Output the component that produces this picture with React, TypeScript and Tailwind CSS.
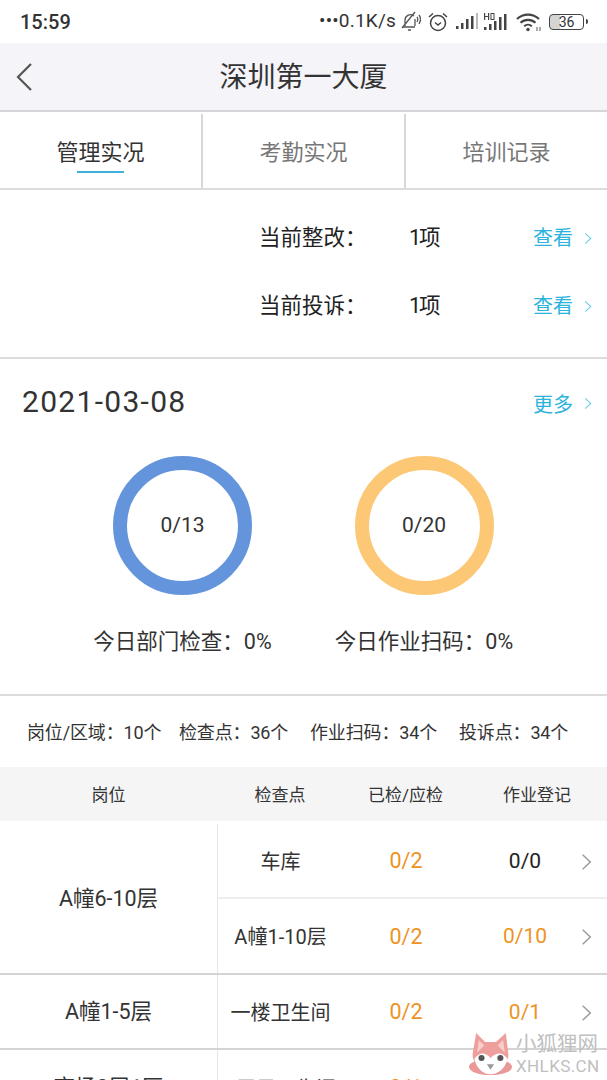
import React from "react";

const F = "font-['Roboto','Noto_Sans_CJK_SC',sans-serif]";

function Chevron({ className }: { className: string }) {
  return (
    <svg viewBox="0 0 10 16" fill="none" stroke="currentColor" className={className}>
      <path d="M1.5 1.5 8.5 8l-7 6.5" strokeWidth="1.3" />
    </svg>
  );
}

function Status() {
  return (
    <div className="h-[43px] bg-white flex items-center pl-5 pr-[19px] text-[#333] shrink-0">
      <span className="text-[20px] font-medium leading-none">15:59</span>
      <div className="ml-auto flex items-center">
        <span className="text-[19px] tracking-[0.2px] whitespace-nowrap mr-[4px]">•••0.1K/s</span>
        <svg width="21" height="21" viewBox="0 0 21 21" fill="none" stroke="#555" strokeWidth="1.3">
          <path d="M3 16h12M5 15V9a5.5 5.5 0 0 1 9-4M15 8v7M8 19h3M2 17 15 1M17 6q1.5 2 0 5M19 4q3 4 0 9" />
        </svg>
        <svg width="22" height="22" viewBox="0 0 22 22" fill="none" stroke="#444" strokeWidth="1.5" className="ml-[6px]">
          <circle cx="11" cy="12" r="7.5" />
          <path d="M8 11.5l3 2.5 3-2.5M2 6l4-3.5M20 6l-4-3.5" />
        </svg>
        <svg width="22" height="17" viewBox="0 0 22 17" fill="#444" className="ml-[7px]">
          <rect x="0" y="13" width="2.5" height="3" />
          <rect x="5" y="10" width="2.5" height="6" />
          <rect x="10" y="6" width="2.5" height="10" />
          <rect x="15" y="3" width="2.5" height="13" />
          <rect x="20" y="0" width="2" height="16" fill="#bbb" />
        </svg>
        <svg width="24" height="20" viewBox="0 0 24 20" fill="#444" className="ml-[6px]">
          <rect x="0" y="15" width="2.5" height="3" />
          <rect x="5" y="12" width="2.5" height="6" />
          <rect x="10" y="9" width="2.5" height="9" />
          <rect x="15" y="5" width="2.5" height="13" />
          <rect x="20" y="2" width="2.5" height="16" />
          <rect x="0" y="1" width="1.2" height="7" />
          <rect x="4" y="1" width="1.2" height="7" />
          <rect x="0" y="4" width="5" height="1" />
          <rect x="7" y="1.5" width="3" height="6" fill="none" stroke="#444" strokeWidth="1" />
        </svg>
        <svg width="26" height="20" viewBox="0 0 26 20" fill="none" stroke="#444" strokeWidth="2.1" className="ml-[8px]">
          <path d="M1 7a16 16 0 0 1 22 0M4.5 10.8a11 11 0 0 1 15 0M8.2 14.2a5.5 5.5 0 0 1 7.6 0" />
          <circle cx="12" cy="17.5" r="1.7" fill="#444" stroke="none" />
          <path d="M21 15v4M24 15v4" strokeWidth="0.9" />
        </svg>
        <div className="ml-[7px] flex items-center">
          <div className="w-[35px] h-[16px] rounded-[4px] border border-[#444] bg-[linear-gradient(90deg,#d5d5d5_30%,transparent_30%)] flex items-center justify-center text-[14px] leading-none text-[#333]">
            36
          </div>
          <div className="w-[2px] h-[5px] bg-[#444] ml-[2px] rounded-r-sm" />
        </div>
      </div>
    </div>
  );
}

function Tab({ label, active, border }: { label: string; active?: boolean; border?: boolean }) {
  return (
    <div className={`relative flex-1 flex items-center justify-center text-[22px] ${active ? "text-[#333]" : "text-[#777]"} ${border ? "border-r-2 border-[#d8d8d8]" : ""}`}>
      <span className="pt-[3px]">{label}</span>
      {active && <div className="absolute left-[77px] top-[57px] w-[47px] h-[2px] bg-[#3eb3d9]" />}
    </div>
  );
}

function InfoRow({ label }: { label: string }) {
  return (
    <div className="h-[68px] flex items-center text-[21.5px] text-[#222] pt-[2px]">
      <span className="ml-[259px] w-[150px]">{label}</span>
      <span className="w-[124px] tracking-[-2px]">1项</span>
      <span className="text-[20px] text-[#2bb3de]">查看</span>
      <Chevron className="ml-[11px] w-[8px] h-[13px] text-[#6fcbe8]" />
    </div>
  );
}

function Ring({ value, label, color }: { value: string; label: string; color: string }) {
  return (
    <div className="w-[242px] flex flex-col items-center -ml-[0.5px]">
      <div className={`w-[139px] h-[139px] rounded-full border-[14px] ${color} flex items-center justify-center text-[21px] text-[#333]`}>
        {value}
      </div>
      <div className="mt-[31px] text-[21.5px] leading-[32px] text-[#333] whitespace-nowrap">{label}</div>
    </div>
  );
}

function Cell({ name, a, b, bOrange, h }: { name: string; a: string; b: string; bOrange?: boolean; h: string }) {
  return (
    <div className={`${h} flex items-center text-[20px] pt-[2px]`}>
      <span className="w-[125px] text-center text-[#333] whitespace-nowrap">{name}</span>
      <span className="w-[126px] text-center text-[#ec941f] text-[21.5px]">{a}</span>
      <span className={`w-[112px] text-center text-[21px] ${bOrange ? "text-[#ec941f]" : "text-[#222]"}`}>{b}</span>
      <Chevron className="w-[11px] h-[18px] text-[#999]" />
    </div>
  );
}

function Fox() {
  return (
    <svg width="45" height="44" viewBox="0 0 50 49">
      <ellipse cx="25" cy="39" rx="24" ry="9" fill="#e99a98" />
      <path d="M9 1 19 11h12L42 1l3 24a20 18 0 0 1-40 0z" fill="#ef9f9b" />
      <path d="M12 9l6 6-8 8zM39 9l-6 6 8 8z" fill="#f7cfcb" />
      <path d="M7 30c6-8 12-8 18-1 7-7 13-7 19 1-3 12-12 17-19 17S10 42 7 30z" fill="#fff" />
      <circle cx="15" cy="29" r="3.4" fill="#555" />
      <circle cx="36" cy="29" r="3.4" fill="#555" />
      <path d="M21 36h8l-4 6z" fill="#999" />
    </svg>
  );
}

export default function App() {
  return (
    <div className={`relative w-[607px] h-[1080px] overflow-hidden bg-white flex flex-col ${F}`}>
      <Status />
      <header className="h-[69px] shrink-0 bg-[#f4f4f9] border-b-2 border-[#d6d6d8] flex items-center relative">
        <svg width="18" height="28" viewBox="0 0 18 28" fill="none" stroke="#555" strokeWidth="2.2" className="ml-[15px]">
          <path d="M16 1 3 14l13 13" />
        </svg>
        <div className="absolute inset-x-0 text-center text-[28px] text-[#333] pt-[3px]">深圳第一大厦</div>
      </header>

      <div className="h-[78px] shrink-0 flex border-b-2 border-[#dcdcdc] pt-[2px]">
        <Tab label="管理实况" active border />
        <Tab label="考勤实况" border />
        <Tab label="培训记录" />
      </div>

      <section className="h-[169px] shrink-0 py-[13px] border-b-2 border-[#dcdcdc]">
        <InfoRow label="当前整改：" />
        <InfoRow label="当前投诉：" />
      </section>

      <section className="h-[337px] shrink-0 border-b-2 border-[#dcdcdc] relative">
        <div className="flex items-center h-[88px] pl-[22px] pr-[15px]">
          <span className="text-[30px] text-[#333] tracking-[1.3px] pb-[4px]">2021-03-08</span>
          <span className="ml-auto text-[20px] text-[#2bb3de] pt-[3px]">更多</span>
          <Chevron className="ml-[11px] w-[8px] h-[13px] text-[#6fcbe8] mt-[1px]" />
        </div>
        <div className="flex pl-[62px] mt-[9px]">
          <Ring value="0/13" label="今日部门检查：0%" color="border-[#6495dc]" />
          <Ring value="0/20" label="今日作业扫码：0%" color="border-[#fdc876]" />
        </div>
      </section>

      <div className="h-[71px] shrink-0 flex items-center pl-[27px] pt-[2px] text-[18px] text-[#333] whitespace-nowrap tracking-[-0.15px]">
        <span className="w-[152px]">岗位/区域：10个</span>
        <span className="w-[131px]">检查点：36个</span>
        <span className="w-[149px]">作业扫码：34个</span>
        <span>投诉点：34个</span>
      </div>

      <div className="h-[54px] shrink-0 bg-[#f6f5f6] flex items-center text-[17px] text-[#333] pt-[4px]">
        <span className="w-[217px] text-center">岗位</span>
        <span className="w-[126px] text-center">检查点</span>
        <span className="w-[125px] text-center">已检/应检</span>
        <span className="w-[138px] text-center">作业登记</span>
      </div>

      <div className="pt-[3px] flex border-b-2 border-[#d4d4d4]">
        <div className="w-[218px] shrink-0 border-r border-[#e6e6e6] flex items-center justify-center text-[21.5px] text-[#333] pt-[2px]">A幢6-10层</div>
        <div className="flex-1">
          <div className="border-b-2 border-[#eeeeee]"><Cell h="h-[73px]" name="车库" a="0/2" b="0/0" /></div>
          <Cell h="h-[74px]" name="A幢1-10层" a="0/2" b="0/10" bOrange />
        </div>
      </div>
      <div className="flex border-b-2 border-[#d4d4d4]">
        <div className="w-[218px] shrink-0 border-r border-[#e6e6e6] flex items-center justify-center text-[21.5px] text-[#333] pt-[2px]">A幢1-5层</div>
        <div className="flex-1"><Cell h="h-[73px]" name="一楼卫生间" a="0/2" b="0/1" bOrange /></div>
      </div>
      <div className="flex">
        <div className="w-[218px] shrink-0 border-r border-[#e6e6e6] flex items-center justify-center text-[21.5px] text-[#333] pt-[2px]">商场3层1区</div>
        <div className="flex-1"><Cell h="h-[75px]" name="3层男卫生间" a="0/1" b="0/1" bOrange /></div>
      </div>

      <div className="absolute left-[468px] top-[1032px] flex items-center whitespace-nowrap">
        <Fox />
        <div className="ml-[3px] flex flex-col text-[#c0c0c0] leading-none">
          <span className="text-[20.5px] leading-[22px]">小狐狸网</span>
          <span className="text-[17px] leading-[18px] mt-[2px] tracking-[0.4px]">XHLKS.CN</span>
        </div>
      </div>
    </div>
  );
}
